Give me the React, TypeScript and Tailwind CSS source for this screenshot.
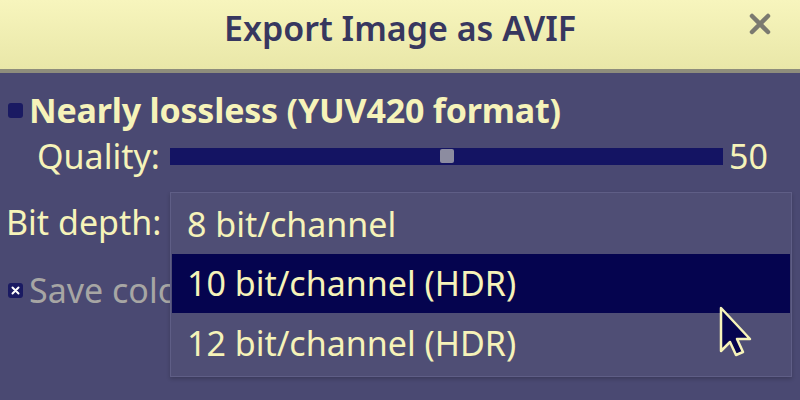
import { useState } from "react";

const options = ["8 bit/channel", "10 bit/channel (HDR)", "12 bit/channel (HDR)"];

export default function App() {
  const [quality] = useState(50);
  const [selected] = useState(1);

  return (
    <div className="relative h-[400px] w-[800px] overflow-hidden bg-[#4a4972] font-['Noto_Sans',sans-serif] text-[#f6f3b9]">
      <header className="relative flex h-[73px] items-center justify-center border-b-4 border-[#8e8d7c] bg-gradient-to-b from-[#f7f5bd] to-[#e9e7a8]">
        <h1 className="mt-[-14px] text-[34px] font-semibold leading-[40px] text-[#37375f]">
          Export Image as AVIF
        </h1>
        <button className="absolute right-[28px] top-[12px] text-[#7b7a70]" aria-label="Close">
          <svg width="24" height="24" viewBox="0 0 24 24">
            <path d="M4 4 L20 20 M20 4 L4 20" stroke="currentColor" strokeWidth="4.5" strokeLinecap="round" />
          </svg>
        </button>
      </header>

      <div className="flex flex-col">
        <label className="mt-[17px] flex items-center gap-[6px] pl-[8px]">
          <span className="h-[15px] w-[15px] rounded-[3px] bg-[#1a1a62]" />
          <span className="text-[34px] font-bold leading-[40px] tracking-[-0.2px]">Nearly lossless (YUV420 format)</span>
        </label>

        <div className="mt-[9px] flex items-center pl-[37px]">
          <span className="w-[133px] text-[34px] leading-[34px]">Quality:</span>
          <div className="relative h-[17px] w-[553px] bg-[#141463]">
            <span className="absolute left-[270px] top-[1px] h-[14px] w-[14px] rounded-[2px] bg-[#8c8ca0]" />
          </div>
          <span className="ml-[6px] text-[34px] leading-[34px]">{quality}</span>
        </div>

        <div className="mt-[29px] flex items-center pl-[6px]">
          <span className="w-[164px] text-[34px] leading-[34px]">Bit depth:</span>
          <div className="h-[40px] w-[621px] rounded-[3px] border border-[#5f5e86] bg-[#504f76]" />
        </div>

        <label className="mt-[31px] flex items-center gap-[6px] whitespace-nowrap pl-[8px]">
          <span className="flex h-[15px] w-[15px] shrink-0 items-center justify-center rounded-[3px] bg-[#1a1a62]">
            <svg width="9" height="9" viewBox="0 0 9 9">
              <path d="M1.5 1.5 L7.5 7.5 M7.5 1.5 L1.5 7.5" stroke="#ffffff" strokeWidth="2" strokeLinecap="round" />
            </svg>
          </span>
          <span className="text-[34px] leading-[34px] text-[#a7a6a4]">Save color profile</span>
        </label>
      </div>

      <ul className="absolute left-[170px] top-[192px] flex h-[185px] w-[622px] flex-col border border-[#5f5e86] bg-[#4f4e75] p-[1px] shadow-[0_2px_4px_rgba(0,0,0,0.2)]">
        {options.map((o, i) => (
          <li
            key={o}
            className={
              i === selected
                ? "flex h-[59px] items-center bg-[#05044f] pl-[15px] text-[34px]"
                : "flex h-[60px] items-center pl-[15px] text-[34px]"
            }
          >
            {o}
          </li>
        ))}
      </ul>

      <svg className="absolute left-[718px] top-[305px]" width="40" height="56" viewBox="0 0 40 56">
        <path
          d="M3 3 L3 46 L12 37 L18 50 L25 47 L19 34 L32 34 Z"
          fill="#05044f"
          stroke="#f6f3b9"
          strokeWidth="2.5"
          strokeLinejoin="round"
        />
      </svg>
    </div>
  );
}
